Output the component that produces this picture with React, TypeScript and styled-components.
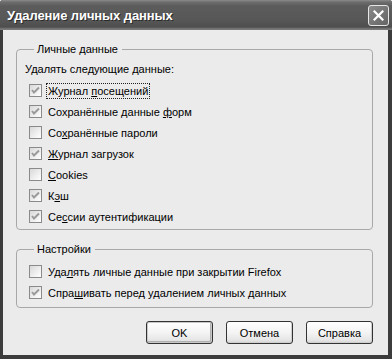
import React from 'react';
import styled, { createGlobalStyle } from 'styled-components';

const GlobalStyle = createGlobalStyle`
    html, body {
        margin: 0;
        padding: 0;
        background: #ffffff;
    }
    body {
        font-family: "Liberation Sans", Arial, sans-serif;
        font-size: 11px;
        color: #000;
    }
`;

const Window = styled.div`
    width: 392px;
    height: 359px;
    box-sizing: border-box;
    display: flex;
    flex-direction: column;
    background: #3c3c3c;
    border-radius: 3px 3px 0 0;
    overflow: hidden;
`;

const TitleBar = styled.div`
    height: 30px;
    flex: none;
    display: flex;
    align-items: center;
    justify-content: space-between;
    padding: 0 3px 0 7px;
    box-sizing: border-box;
    background: linear-gradient(to bottom, #8c8c8c 0px, #6e6e6e 2px, #5c5c5c 6px, #575757 20px, #4e4e4e 27px, #7a7a7a 29px);
`;

const Title = styled.span`
    color: #ffffff;
    font-family: "Liberation Sans", Arial, sans-serif;
    font-weight: bold;
    font-size: 13px;
    letter-spacing: -0.1px;
    text-shadow: 1px 1px 0 #2a2a2a;
    padding-top: 1px;
`;

const CloseButton = styled.div`
    width: 21px;
    height: 21px;
    box-sizing: border-box;
    border: 1px solid #e6e6e6;
    border-radius: 3px;
    background: linear-gradient(135deg, #8a8a8a, #646464);
    display: flex;
    align-items: center;
    justify-content: center;
`;

const Client = styled.div`
    flex: 1;
    margin: 0 4px 4px 3px;
    background: #ebebeb;
    padding: 12px 15px 0 13px;
    display: flex;
    flex-direction: column;
`;

const Group = styled.fieldset<{ $height: number; $top: number }>`
    margin: 0;
    margin-top: ${(p) => p.$top}px;
    height: ${(p) => p.$height}px;
    box-sizing: border-box;
    border: 1px solid #a8a8a8;
    border-radius: 4px;
    padding: 0 8px 0 12px;
    display: flex;
    flex-direction: column;
    min-width: 0;
`;

const Legend = styled.legend`
    padding: 0 4px 0 3px;
    margin-left: 5px;
    line-height: 14px;
    font-size: 11px;
    color: #000;
`;

const Caption = styled.div`
    height: 22px;
    margin-top: 2px;
    display: flex;
    align-items: center;
    margin-left: -4px;
`;

const Row = styled.div<{ $first?: boolean }>`
    height: 21px;
    display: flex;
    align-items: center;
    gap: 4px;
    margin-top: ${(p) => (p.$first ? '5px' : '0')};
`;

const Box = styled.span`
    width: 13px;
    height: 13px;
    box-sizing: border-box;
    border: 1px solid #8a8a8a;
    background: linear-gradient(135deg, #d8d8d8 0%, #f0f0f0 60%, #ffffff 100%);
    display: flex;
    align-items: center;
    justify-content: center;
    flex: none;
`;

const LabelText = styled.span<{ $focused?: boolean }>`
    padding: 0 1px;
    line-height: 14px;
    border: 1px dotted ${(p) => (p.$focused ? '#222' : 'transparent')};
    white-space: nowrap;
`;

const Buttons = styled.div`
    display: flex;
    justify-content: flex-end;
    gap: 13px;
    margin-top: 13px;
`;

const Button = styled.div<{ $default?: boolean }>`
    width: 67px;
    height: 23px;
    box-sizing: border-box;
    border: 1px solid #333;
    border-radius: 3px;
    background: linear-gradient(to bottom, #ffffff 0%, #f4f4f4 50%, #e6e6e6 85%, #d4d4d4 100%);
    box-shadow: ${(p) => (p.$default ? 'inset 0 0 0 1px #c8c8c8, inset -1px -1px 0 1px #b0b0b0' : 'inset -1px -1px 0 #cfcfcf')};
    display: flex;
    align-items: center;
    justify-content: center;
    font-size: 11px;
`;

const Check = () => (
    <svg width="9" height="9" viewBox="0 0 9 9">
        <polyline points="1,4 3,6.5 8,1.5" fill="none" stroke="#9a9a9a" strokeWidth="2" />
    </svg>
);

interface Item {
    before: string;
    key: string;
    after: string;
    checked: boolean;
    focused?: boolean;
}

const personal: Item[] = [
    { before: 'Журнал ', key: 'п', after: 'осещений', checked: true, focused: true },
    { before: 'Сохранённые данные ', key: 'ф', after: 'орм', checked: true },
    { before: 'Со', key: 'х', after: 'ранённые пароли', checked: false },
    { before: '', key: 'Ж', after: 'урнал загрузок', checked: true },
    { before: '', key: 'C', after: 'ookies', checked: false },
    { before: 'К', key: 'э', after: 'ш', checked: true },
    { before: 'Се', key: 'с', after: 'сии аутентификации', checked: true },
];

const settings: Item[] = [
    { before: 'Уда', key: 'л', after: 'ять личные данные при закрытии Firefox', checked: false },
    { before: 'Спра', key: 'ш', after: 'ивать перед удалением личных данных', checked: true },
];

function CheckRow({ item, first }: { item: Item; first?: boolean }) {
    return (
        <Row $first={first}>
            <Box>{item.checked && <Check />}</Box>
            <LabelText $focused={item.focused}>
                {item.before}
                <u>{item.key}</u>
                {item.after}
            </LabelText>
        </Row>
    );
}

export default function App() {
    return (
        <>
            <GlobalStyle />
            <Window>
                <TitleBar>
                    <Title>Удаление личных данных</Title>
                    <CloseButton>
                        <svg width="11" height="11" viewBox="0 0 11 11">
                            <path d="M1.5 1.5 L9.5 9.5 M9.5 1.5 L1.5 9.5" stroke="#fff" strokeWidth="2.2" strokeLinecap="square" />
                        </svg>
                    </CloseButton>
                </TitleBar>
                <Client>
                    <Group $top={0} $height={188}>
                        <Legend>Личные данные</Legend>
                        <Caption>Удалять следующие данные:</Caption>
                        {personal.map((it) => (
                            <CheckRow key={it.before + it.key} item={it} />
                        ))}
                    </Group>
                    <Group $top={12} $height={66}>
                        <Legend>Настройки</Legend>
                        {settings.map((it, i) => (
                            <CheckRow key={it.before + it.key} item={it} first={i === 0} />
                        ))}
                    </Group>
                    <Buttons>
                        <Button $default>OK</Button>
                        <Button>Отмена</Button>
                        <Button>Справка</Button>
                    </Buttons>
                </Client>
            </Window>
        </>
    );
}
